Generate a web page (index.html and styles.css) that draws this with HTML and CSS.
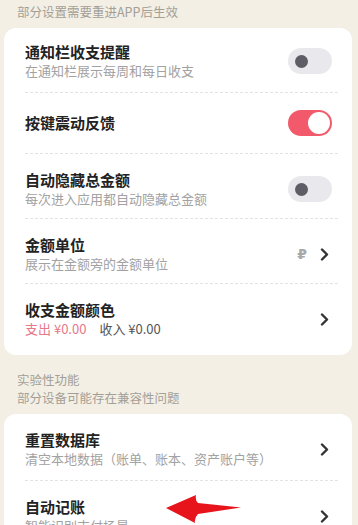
FILE: index.html
```html
<!DOCTYPE html>
<html lang="zh-CN">
<head>
<meta charset="utf-8">
<title>设置</title>
<link rel="stylesheet" href="styles.css">
</head>
<body>
<div class="page">
  <div class="section-head">
    <div class="head-line">部分设置需要重进APP后生效</div>
  </div>
  <div class="card">
    <div class="row row-first">
      <div class="texts">
        <div class="title">通知栏收支提醒</div>
        <div class="sub">在通知栏展示每周和每日收支</div>
      </div>
      <div class="toggle"><span class="knob"></span></div>
    </div>
    <div class="row row-single">
      <div class="texts">
        <div class="title">按键震动反馈</div>
      </div>
      <div class="toggle on"><span class="knob"></span></div>
    </div>
    <div class="row">
      <div class="texts">
        <div class="title">自动隐藏总金额</div>
        <div class="sub">每次进入应用都自动隐藏总金额</div>
      </div>
      <div class="toggle"><span class="knob"></span></div>
    </div>
    <div class="row">
      <div class="texts">
        <div class="title">金额单位</div>
        <div class="sub">展示在金额旁的金额单位</div>
      </div>
      <div class="trail">
        <span class="unit">₽</span>
        <svg class="chev" width="9" height="13" viewBox="0 0 9 13"><path d="M2 1.5 L7 6.5 L2 11.5" fill="none" stroke="#333" stroke-width="2.4" stroke-linecap="round" stroke-linejoin="round"/></svg>
      </div>
    </div>
    <div class="row row-last">
      <div class="texts">
        <div class="title">收支金额颜色</div>
        <div class="sub amounts"><span class="expense">支出 ¥0.00</span><span class="income">收入 ¥0.00</span></div>
      </div>
      <div class="trail">
        <svg class="chev" width="9" height="13" viewBox="0 0 9 13"><path d="M2 1.5 L7 6.5 L2 11.5" fill="none" stroke="#333" stroke-width="2.4" stroke-linecap="round" stroke-linejoin="round"/></svg>
      </div>
    </div>
  </div>

  <div class="section-head second">
    <div class="head-line">实验性功能</div>
    <div class="head-line">部分设备可能存在兼容性问题</div>
  </div>
  <div class="card">
    <div class="row row-c2">
      <div class="texts">
        <div class="title">重置数据库</div>
        <div class="sub">清空本地数据（账单、账本、资产账户等）</div>
      </div>
      <div class="trail">
        <svg class="chev" width="9" height="13" viewBox="0 0 9 13"><path d="M2 1.5 L7 6.5 L2 11.5" fill="none" stroke="#333" stroke-width="2.4" stroke-linecap="round" stroke-linejoin="round"/></svg>
      </div>
    </div>
    <div class="row row-c2 row-last2">
      <div class="texts">
        <div class="title">自动记账</div>
        <div class="sub">智能识别支付场景</div>
      </div>
      <div class="trail">
        <svg class="chev" width="9" height="13" viewBox="0 0 9 13"><path d="M2 1.5 L7 6.5 L2 11.5" fill="none" stroke="#333" stroke-width="2.4" stroke-linecap="round" stroke-linejoin="round"/></svg>
      </div>
    </div>
  </div>
</div>
<svg class="arrow" width="80" height="32" viewBox="0 0 80 32"><path d="M2 15 L32 2 Q31 7 34 10 L77 14.5 L34 21 Q30 25 31 30 Z" fill="#e8141c"/></svg>
</body>
</html>
```

FILE: styles.css
```css
html, body {
  margin: 0;
  padding: 0;
  height: 100%;
  overflow: hidden;
}
body {
  background: #f3efe5;
  font-family: "Noto Sans CJK SC", "Noto Sans", sans-serif;
  position: relative;
}
.page {
  padding: 3px 6px 0 4px;
}
.section-head {
  padding-left: 13px;
  margin-bottom: 7px;
}
.section-head.second {
  margin-top: 16px;
}
.head-line {
  font-size: 12.5px;
  line-height: 18px;
  height: 18px;
  overflow: hidden;
  color: #a39f97;
}
.card {
  background: #ffffff;
  border-radius: 12px;
}
.row {
  display: flex;
  align-items: center;
  margin: 0 14px 0 21px;
  padding: 16px 0 10px;
  border-bottom: 1px dashed #e3e3e3;
}
.row-first {
  padding: 14px 0 12px;
}
.row-single {
  padding: 17px 0 17px;
}
.row-last {
  border-bottom: none;
  padding: 16px 0 17px;
}
.row-c2 {
  padding: 16px 0 12px;
}
.row-last2 {
  border-bottom: none;
}
.texts {
  flex: 1;
  min-width: 0;
}
.title {
  font-size: 15px;
  line-height: 20px;
  height: 20px;
  font-weight: 700;
  color: #222222;
}
.sub {
  font-size: 13px;
  line-height: 18px;
  height: 18px;
  color: #a2a2a2;
  white-space: nowrap;
}
.amounts {
  display: flex;
  gap: 13px;
  font-size: 13px;
}
.expense {
  color: #e6788a;
}
.income {
  color: #555555;
}
.toggle {
  width: 44px;
  height: 26px;
  border-radius: 13px;
  background: #e9e8ed;
  margin-right: 6px;
  display: flex;
  align-items: center;
  padding: 0 7px;
  box-sizing: border-box;
}
.toggle .knob {
  width: 13px;
  height: 13px;
  border-radius: 50%;
  background: #5e5c64;
}
.toggle.on {
  background: #f25a6b;
  justify-content: flex-end;
  padding: 0 2px;
}
.toggle.on .knob {
  width: 22px;
  height: 22px;
  background: #ffffff;
}
.trail {
  display: flex;
  align-items: center;
  gap: 13px;
  margin-right: 9px;
}
.unit {
  font-family: "DejaVu Sans", sans-serif;
  font-size: 14px;
  color: #a8a8a8;
  font-weight: 700;
}
.chev {
  display: block;
}
.arrow {
  position: absolute;
  left: 164px;
  top: 493px;
}
```
